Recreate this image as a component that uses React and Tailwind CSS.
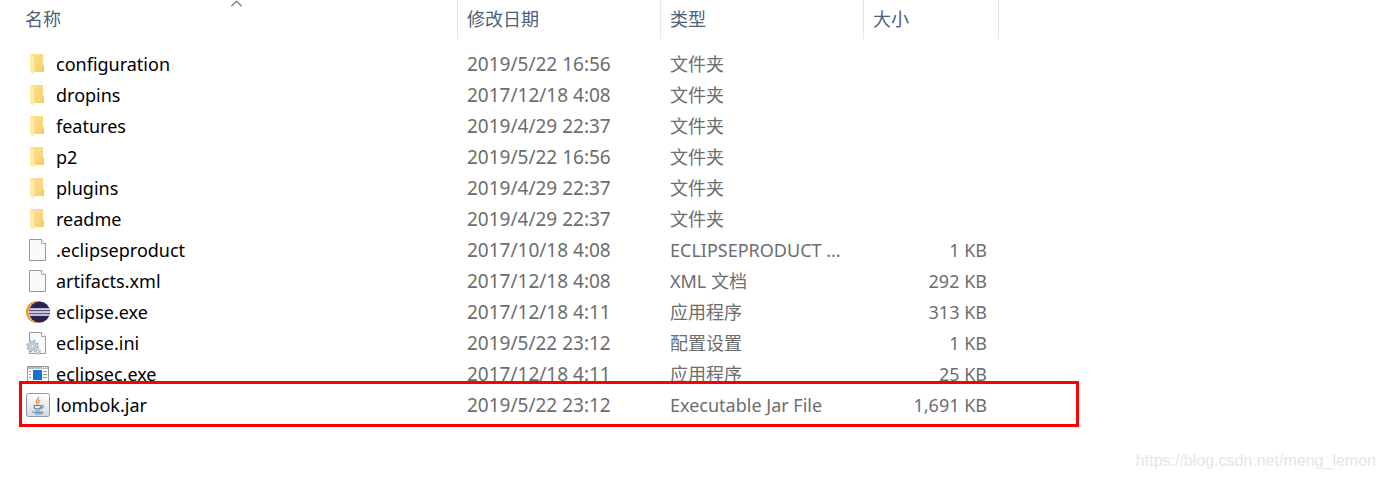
import { ChevronUp } from "lucide-react";

const files = [
  { name: "configuration", date: "2019/5/22 16:56", type: "文件夹", size: "", icon: "folder" },
  { name: "dropins", date: "2017/12/18 4:08", type: "文件夹", size: "", icon: "folder" },
  { name: "features", date: "2019/4/29 22:37", type: "文件夹", size: "", icon: "folder" },
  { name: "p2", date: "2019/5/22 16:56", type: "文件夹", size: "", icon: "folder" },
  { name: "plugins", date: "2019/4/29 22:37", type: "文件夹", size: "", icon: "folder" },
  { name: "readme", date: "2019/4/29 22:37", type: "文件夹", size: "", icon: "folder" },
  { name: ".eclipseproduct", date: "2017/10/18 4:08", type: "ECLIPSEPRODUCT ...", size: "1 KB", icon: "file" },
  { name: "artifacts.xml", date: "2017/12/18 4:08", type: "XML 文档", size: "292 KB", icon: "file" },
  { name: "eclipse.exe", date: "2017/12/18 4:11", type: "应用程序", size: "313 KB", icon: "eclipse" },
  { name: "eclipse.ini", date: "2019/5/22 23:12", type: "配置设置", size: "1 KB", icon: "config" },
  { name: "eclipsec.exe", date: "2017/12/18 4:11", type: "应用程序", size: "25 KB", icon: "app" },
  { name: "lombok.jar", date: "2019/5/22 23:12", type: "Executable Jar File", size: "1,691 KB", icon: "jar", marked: true },
];

function FolderIcon() {
  return (
    <svg viewBox="0 0 24 24" className="h-6 w-6 shrink-0">
      <defs>
        <linearGradient id="folderBack" x1="0" y1="0" x2="1" y2="1">
          <stop offset="0" stopColor="#fbe294" />
          <stop offset="1" stopColor="#f4d06b" />
        </linearGradient>
      </defs>
      <path d="M4 2h13v11h1v7H5z" fill="url(#folderBack)" />
      <path d="M17 13h1v7h-2z" fill="#efca62" />
      <path d="M4 2l5 3v14l-1 1v3l-4-3z" fill="#ffeaa8" />
      <path d="M8.500 5v14" stroke="#f2d47c" strokeWidth="0.6" />
    </svg>
  );
}

function Page() {
  return (
    <>
      <path d="M3.500 1.500h12l4 4v17h-16z" fill="#fafafa" stroke="#999" />
      <path d="M15.500 1.500v4h4" fill="#fff" stroke="#a8a8a8" />
    </>
  );
}

function FileIcon() {
  return (
    <svg viewBox="0 0 24 24" className="h-6 w-6 shrink-0">
      <Page />
    </svg>
  );
}

function ConfigIcon() {
  return (
    <svg viewBox="0 0 24 24" className="h-6 w-6 shrink-0">
      <Page />
      <circle cx="6.500" cy="15" r="5.300" fill="#e9eff4" stroke="#a3afba" strokeWidth="2" strokeDasharray="2.200 1.960" />
      <circle cx="6.500" cy="15" r="3.600" fill="#dfe8f0" stroke="#b8c6d2" strokeWidth="2" />
      <circle cx="6.500" cy="15" r="1.600" fill="#fff" stroke="#8e9aa5" strokeWidth="0.700" />
      <circle cx="11.500" cy="20.500" r="2.500" fill="#e3ebf2" stroke="#adb8c2" strokeWidth="1.500" strokeDasharray="1.500 0.800" />
      <circle cx="11.500" cy="20.500" r="1" fill="#fff" stroke="#97a3ae" strokeWidth="0.500" />
    </svg>
  );
}

function EclipseIcon() {
  return (
    <svg viewBox="0 0 24 24" className="h-6 w-6 shrink-0">
      <circle cx="11" cy="12" r="11" fill="#f0922b" />
      <circle cx="13" cy="12" r="10.700" fill="#f8d9ae" />
      <circle cx="13.500" cy="12" r="10.500" fill="#2c2255" />
      <path d="M3.500 10h20M3.500 13h20" stroke="#5d568a" strokeWidth="2" />
      <path d="M3.500 9h20M3 12h21M3.500 15h20" stroke="#f3f2f8" strokeWidth="1.400" />
    </svg>
  );
}

function AppIcon() {
  return (
    <svg viewBox="0 0 24 24" className="h-6 w-6 shrink-0">
      <path d="M1.500 4.500h21v17h-21z" fill="#fff" stroke="#8d989f" />
      <path d="M2 5h20v2H2z" fill="#b3bcc2" />
      <path d="M16 5.500h1M18 5.500h1M20 5.500h1" stroke="#fff" />
      <path d="M7 8h9v10H7z" fill="#0f75d4" />
      <path d="M3 9.500h2M3 12.500h2M3 15.500h2M17 9.500h4M17 12.500h4M17 15.500h4" stroke="#8b979f" />
    </svg>
  );
}

function JarIcon() {
  return (
    <svg viewBox="0 0 24 24" className="h-6 w-6 shrink-0">
      <defs>
        <linearGradient id="jarTile" x1="0" y1="0" x2="0" y2="1">
          <stop offset="0" stopColor="#ffffff" />
          <stop offset="1" stopColor="#d3dbe2" />
        </linearGradient>
      </defs>
      <rect x="0.500" y="0.500" width="23" height="23" rx="2" fill="url(#jarTile)" stroke="#8c9ba7" />
      <path
        d="M12.500 4c1.200 2.200-3.200 3-2 5.500l1.300 2M14.300 7c-2.600 1.200-2 2.200-1.100 3.500"
        fill="none"
        stroke="#ee8432"
        strokeWidth="1.300"
      />
      <path
        d="M7.500 12.500h7.500M8 13.500c0 3.300 6.500 3.300 6.800 0M15 13c3.300-1 2.500 2-.6 2.500"
        fill="none"
        stroke="#527da0"
        strokeWidth="1.100"
      />
      <path
        d="M9 17.500c1.500.6 4 .6 5.200 0M6.500 18c-3 1.600 8 2.300 10.500.3M9 20.800c3.500.4 7 0 8.500-1.100"
        fill="none"
        stroke="#527da0"
        strokeWidth="0.900"
      />
    </svg>
  );
}

const icons = {
  folder: FolderIcon,
  file: FileIcon,
  config: ConfigIcon,
  eclipse: EclipseIcon,
  app: AppIcon,
  jar: JarIcon,
};

function HeaderCell({ children }) {
  return (
    <th scope="col" className="h-[39px] border-r border-[#e5e5e5] pl-[9px] text-left font-normal">
      {children}
    </th>
  );
}

function FileRow({ file }) {
  const Icon = icons[file.icon];

  return (
    <tr className={file.marked ? "relative isolate z-10 h-[31px]" : "h-[31px]"}>
      <td className="pl-[26px] text-black">
        {file.marked && (
          <div className="absolute -top-[9px] left-[19px] -z-10 h-[46px] w-[1060px] border-3 border-[#fe0000] bg-white" />
        )}
        <div className="flex items-start gap-[6px]">
          <span className="pt-[3px]">
            <Icon />
          </span>
          <span>{file.name}</span>
        </div>
      </td>
      <td className="pl-[9px] text-[19px]">{file.date}</td>
      <td className="pl-[9px]">{file.type}</td>
      <td className="pr-3 text-right">{file.size}</td>
      <td />
    </tr>
  );
}

export default function App() {
  return (
    <main className="bg-white font-['Noto_Sans','Noto_Sans_CJK_SC',sans-serif] text-[18px] leading-[31px] text-[#6d6d6d]">
      <table className="w-full table-fixed border-separate border-spacing-0 whitespace-nowrap">
        <colgroup>
          <col className="w-[458px]" />
          <col className="w-[203px]" />
          <col className="w-[203px]" />
          <col className="w-[135px]" />
          <col />
        </colgroup>
        <thead className="text-[#4c607a]">
          <tr className="relative">
            <th scope="col" className="h-[39px] border-r border-[#e5e5e5] pl-[25px] text-left font-normal">
              名称
              <ChevronUp className="absolute -top-[6px] left-[227px] h-[19px] w-[19px] text-[#666]" strokeWidth={1.5} />
            </th>
            <HeaderCell>修改日期</HeaderCell>
            <HeaderCell>类型</HeaderCell>
            <HeaderCell>大小</HeaderCell>
            <td />
          </tr>
        </thead>
        <tbody>
          <tr aria-hidden="true">
            <td colSpan={5} className="h-[10px] p-0" />
          </tr>
          {files.map((file) => (
            <FileRow key={file.name} file={file} />
          ))}
        </tbody>
      </table>
      <footer className="flex justify-end pt-6 pr-2 font-['Liberation_Sans',sans-serif] text-[16px] text-[#e6e6e6]">
        <a href="https://blog.csdn.net/meng_lemon">https://blog.csdn.net/meng_lemon</a>
      </footer>
    </main>
  );
}
